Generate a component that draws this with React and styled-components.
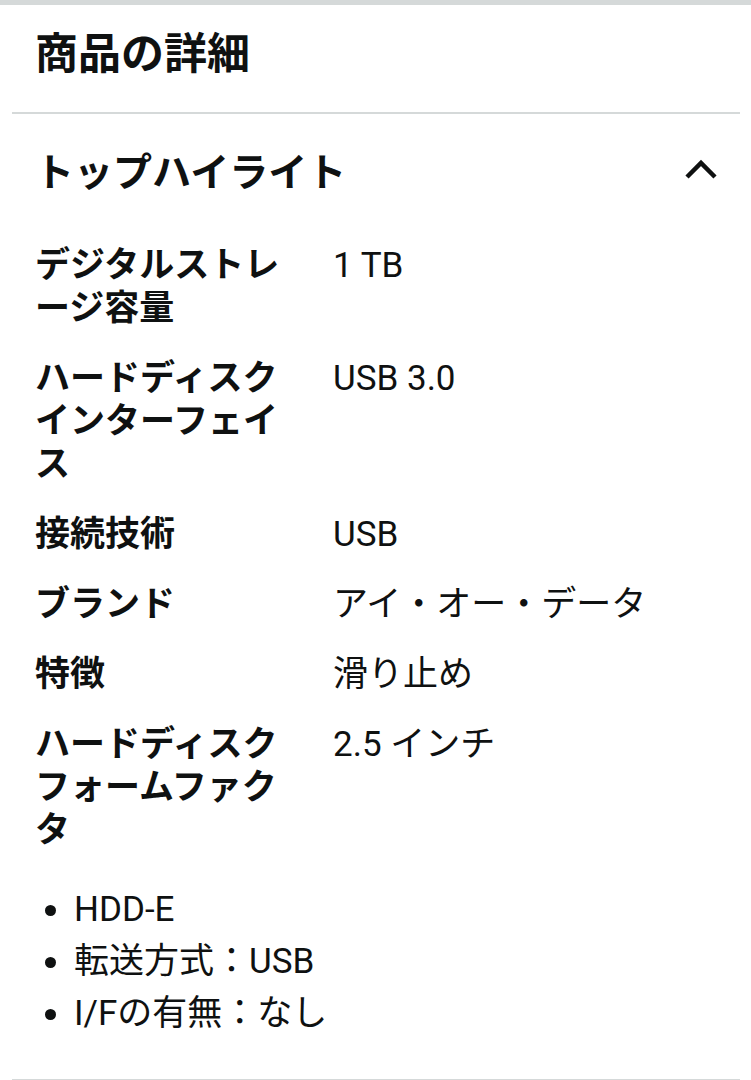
import styled, { createGlobalStyle } from 'styled-components';

const GlobalStyle = createGlobalStyle`
  html, body {
    margin: 0;
    padding: 0;
    background: #ffffff;
  }
  body {
    font-family: Roboto, "Noto Sans CJK JP", sans-serif;
    color: #0f1111;
  }
`;

const specs = [
  { label: 'デジタルストレージ容量', value: '1 TB' },
  { label: 'ハードディスクインターフェイス', value: 'USB 3.0' },
  { label: '接続技術', value: 'USB' },
  { label: 'ブランド', value: 'アイ・オー・データ' },
  { label: '特徴', value: '滑り止め' },
  { label: 'ハードディスクフォームファクタ', value: '2.5 インチ' },
];

const bullets = ['HDD-E', '転送方式：USB', 'I/Fの有無：なし'];

function ChevronUp() {
  return (
    <svg width="34" height="22" viewBox="0 0 34 22" fill="none">
      <path
        d="M3 18 L17 4 L31 18"
        stroke="#0f1111"
        strokeWidth="4.5"
        strokeLinecap="butt"
        strokeLinejoin="miter"
      />
    </svg>
  );
}

function App() {
  return (
    <>
      <GlobalStyle />
      <Page>
        <Title>商品の詳細</Title>
        <Divider $top={33} />
        <Section>
          <SectionHeader>
            <SectionTitle>トップハイライト</SectionTitle>
            <Toggle aria-label="閉じる">
              <ChevronUp />
            </Toggle>
          </SectionHeader>
          <SpecTable>
            {specs.map((spec) => (
              <SpecRow key={spec.label}>
                <SpecLabel>{spec.label}</SpecLabel>
                <SpecValue>{spec.value}</SpecValue>
              </SpecRow>
            ))}
          </SpecTable>
          <BulletList>
            {bullets.map((item) => (
              <BulletItem key={item}>{item}</BulletItem>
            ))}
          </BulletList>
        </Section>
        <Divider $top={39} />
      </Page>
    </>
  );
}

const Page = styled.div`
    width: 100%;
    border-top: 5px solid #d5d9d9;
    display: flex;
    flex-direction: column;
`;

const Title = styled.h2`
    margin: 24px 0 0;
    padding: 0 35px;
    font-size: 43px;
    line-height: 50px;
    font-weight: 700;
`;

const Divider = styled.div`
    height: 2px;
    margin: ${(p) => p.$top}px 11px 0 12px;
    background: #d5d9d9;
`;

const Section = styled.section`
    padding: 36px 33px 0 35px;
`;

const SectionHeader = styled.div`
    display: flex;
    align-items: center;
    justify-content: space-between;
`;

const SectionTitle = styled.h3`
    margin: 0;
    font-size: 39px;
    line-height: 46px;
    font-weight: 700;
`;

const Toggle = styled.button`
    border: none;
    background: none;
    padding: 0;
    display: flex;
    margin-top: -6px;
`;

const SpecTable = styled.div`
    margin-top: 48px;
    display: flex;
    flex-direction: column;
    gap: 27px;
`;

const SpecRow = styled.div`
    display: grid;
    grid-template-columns: 262px 1fr;
    column-gap: 36px;
    font-size: 35px;
    line-height: 43px;
`;

const SpecLabel = styled.div`
    font-weight: 700;
    line-break: loose;
`;

const SpecValue = styled.div`
    font-weight: 400;
`;

const BulletList = styled.ul`
    margin: 32px 0 0;
    padding: 0 0 0 38px;
    font-size: 35px;
    line-height: 52px;
`;

const BulletItem = styled.li`
    padding-left: 1px;
`;

export default App;
